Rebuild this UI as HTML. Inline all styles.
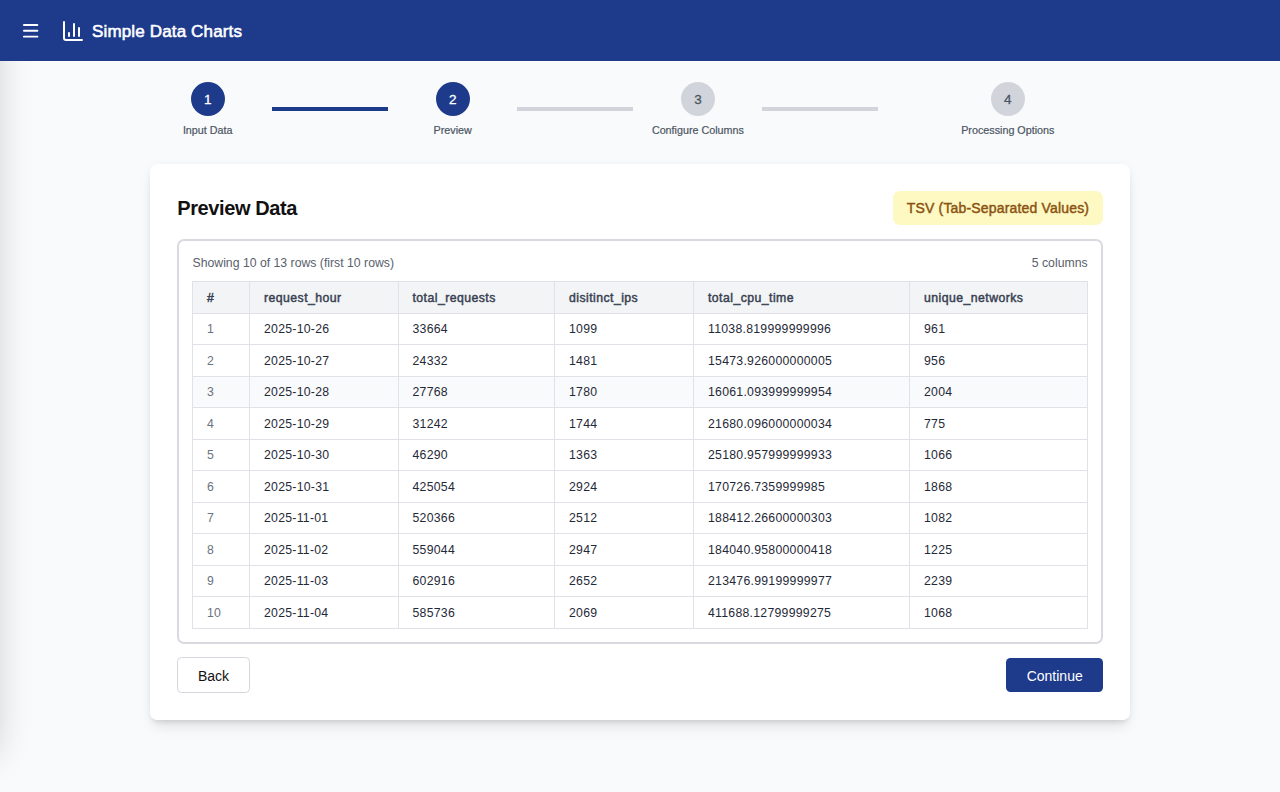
<!DOCTYPE html>
<html><head><meta charset="utf-8">
<style>
*{box-sizing:border-box;margin:0;padding:0}
html,body{width:1280px;height:792px;overflow:hidden}
body{background:#f9fafb;font-family:"Liberation Sans",sans-serif;position:relative;color:#111827}
.hdr{position:absolute;z-index:2;left:0;top:0;width:1280px;height:61px;background:#1e3a8a;}
.lshadow{position:absolute;left:-300px;top:0;width:300px;height:740px;background:#fff;box-shadow:0 20px 36px -8px rgba(0,0,0,.24)}
.abs{position:absolute;white-space:nowrap}
.htitle{left:92px;top:20.8px;font-size:17px;color:#fff;line-height:22px;letter-spacing:0.15px;-webkit-text-stroke:0.55px #fff}
.circle{position:absolute;width:34px;height:34px;border-radius:50%;text-align:center;line-height:35.5px;font-size:13.5px}
.on{background:#1e3a8a;color:#fff;-webkit-text-stroke:0.3px #fff}
.off{background:#d1d5db;color:#4b5563;-webkit-text-stroke:0.3px #4b5563}
.slabel{position:absolute;font-size:10.75px;color:#4b5563;-webkit-text-stroke:0.2px #4b5563;line-height:12px;text-align:center;width:200px;margin-left:-100px}
.conn{position:absolute;top:107px;height:3.5px;width:116px}
.card{position:absolute;left:150px;top:164px;width:980px;height:556px;background:#fff;border-radius:7px;box-shadow:0 9px 14px -3px rgba(0,0,0,.1),0 3.5px 5px -3px rgba(0,0,0,.1),0 1px 9px rgba(0,0,0,.045)}
.ptitle{left:177.3px;top:196.4px;font-size:20px;font-weight:bold;line-height:24px;color:#111;letter-spacing:-0.4px}
.badge{position:absolute;left:893px;top:191px;width:210px;height:34px;background:#fef9c3;border-radius:7px;color:#8a5311;font-size:14px;line-height:34px;text-align:center;letter-spacing:0.17px;-webkit-text-stroke:0.45px #8a5311}
.box{position:absolute;left:177px;top:239px;width:926px;height:405px;border:2px solid #d8dadf;border-radius:7px}
.meta{font-size:12.25px;color:#59606c;line-height:14px}
table{position:absolute;left:192px;top:281px;border-collapse:collapse;font-size:12.25px}
td,th{border:1px solid #e0e2e7;text-align:left;padding:1px 0 0 14px;height:31.5px;white-space:nowrap}
th{background:#f3f4f6;font-weight:normal;color:#374151;-webkit-text-stroke:0.45px #374151;letter-spacing:0.45px}
td{color:#1f2937;letter-spacing:0.27px}
td.n{color:#6b7280}
tr.hl td{background:#f9fafb}
.btn{position:absolute;font-size:14px;text-align:center}
.back{left:177.2px;top:657.2px;width:72.6px;height:35.5px;border:1px solid #d4d6db;border-radius:4.5px;background:#fff;line-height:36px;color:#111}
.cont{left:1006.4px;top:658.3px;width:96.6px;height:33.8px;background:#1e3a8a;border-radius:4.5px;color:#fff;line-height:36.6px}
</style></head>
<body>
<div class="hdr">
  <svg class="abs" style="left:20px;top:19px" width="22" height="24" viewBox="0 0 22 24"><rect x="3" y="5" width="15.3" height="1.9" rx=".9" fill="#fff"/><rect x="3" y="10.8" width="15.3" height="1.9" rx=".9" fill="#fff"/><rect x="3" y="16.7" width="15.3" height="1.9" rx=".9" fill="#fff"/></svg>
  <svg class="abs" style="left:61px;top:19px" width="24" height="24" viewBox="0 0 24 24" fill="none" stroke="#fff" stroke-width="2" stroke-linecap="round" stroke-linejoin="round"><path d="M3 3v16a2 2 0 0 0 2 2h16"/><path d="M18 17V9"/><path d="M13 17V5"/><path d="M8 17v-3"/></svg>
  <div class="abs htitle">Simple Data Charts</div>
</div>
<div class="lshadow"></div>

<div class="circle on" style="left:190.7px;top:81.7px">1</div>
<div class="slabel" style="left:207.7px;top:123.5px">Input Data</div>
<div class="conn" style="left:272px;background:#1e3a8a"></div>
<div class="circle on" style="left:435.7px;top:81.7px">2</div>
<div class="slabel" style="left:452.7px;top:123.5px">Preview</div>
<div class="conn" style="left:517px;background:#d1d5db"></div>
<div class="circle off" style="left:680.9px;top:81.7px">3</div>
<div class="slabel" style="left:697.9px;top:123.5px">Configure Columns</div>
<div class="conn" style="left:762px;background:#d1d5db"></div>
<div class="circle off" style="left:990.8px;top:81.7px">4</div>
<div class="slabel" style="left:1007.8px;top:123.5px">Processing Options</div>

<div class="card"></div>
<div class="abs ptitle">Preview Data</div>
<div class="badge">TSV (Tab-Separated Values)</div>
<div class="box"></div>
<div class="abs meta" style="left:192.5px;top:256px">Showing 10 of 13 rows (first 10 rows)</div>
<div class="abs meta" style="right:192.4px;top:256px">5 columns</div>

<table>
<tr><th style="width:57px">#</th><th style="width:148.5px">request_hour</th><th style="width:156.5px">total_requests</th><th style="width:139px">disitinct_ips</th><th style="width:216px">total_cpu_time</th><th style="width:178px">unique_networks</th></tr>
<tr><td class="n">1</td><td>2025-10-26</td><td>33664</td><td>1099</td><td>11038.819999999996</td><td>961</td></tr>
<tr><td class="n">2</td><td>2025-10-27</td><td>24332</td><td>1481</td><td>15473.926000000005</td><td>956</td></tr>
<tr class="hl"><td class="n">3</td><td>2025-10-28</td><td>27768</td><td>1780</td><td>16061.093999999954</td><td>2004</td></tr>
<tr><td class="n">4</td><td>2025-10-29</td><td>31242</td><td>1744</td><td>21680.096000000034</td><td>775</td></tr>
<tr><td class="n">5</td><td>2025-10-30</td><td>46290</td><td>1363</td><td>25180.957999999933</td><td>1066</td></tr>
<tr><td class="n">6</td><td>2025-10-31</td><td>425054</td><td>2924</td><td>170726.7359999985</td><td>1868</td></tr>
<tr><td class="n">7</td><td>2025-11-01</td><td>520366</td><td>2512</td><td>188412.26600000303</td><td>1082</td></tr>
<tr><td class="n">8</td><td>2025-11-02</td><td>559044</td><td>2947</td><td>184040.95800000418</td><td>1225</td></tr>
<tr><td class="n">9</td><td>2025-11-03</td><td>602916</td><td>2652</td><td>213476.99199999977</td><td>2239</td></tr>
<tr><td class="n">10</td><td>2025-11-04</td><td>585736</td><td>2069</td><td>411688.12799999275</td><td>1068</td></tr>
</table>

<div class="btn back">Back</div>
<div class="btn cont">Continue</div>
</body></html>
